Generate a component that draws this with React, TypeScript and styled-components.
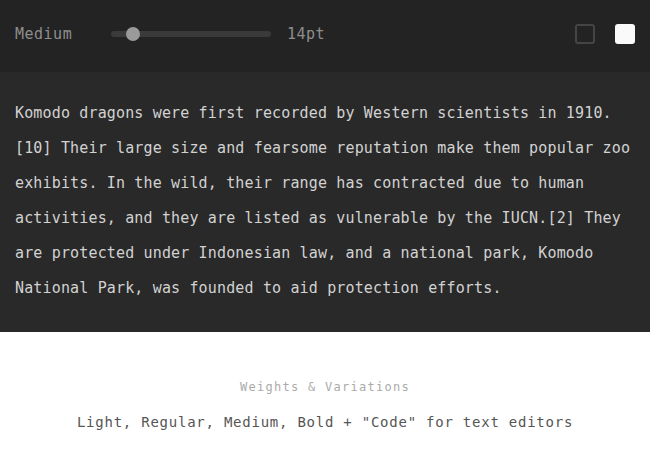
import React from 'react';
import styled, { createGlobalStyle } from 'styled-components';

const GlobalStyle = createGlobalStyle`
  html, body {
    margin: 0;
    padding: 0;
    background: #ffffff;
  }
  body {
    font-family: "DejaVu Sans Mono", "Liberation Mono", monospace;
  }
`;

const lines = [
  'Komodo dragons were first recorded by Western scientists in 1910.',
  '[10] Their large size and fearsome reputation make them popular zoo',
  'exhibits. In the wild, their range has contracted due to human',
  'activities, and they are listed as vulnerable by the IUCN.[2] They',
  'are protected under Indonesian law, and a national park, Komodo',
  'National Park, was founded to aid protection efforts.',
];

const Page = styled.div`
  width: 650px;
  display: flex;
  flex-direction: column;
`;

const Toolbar = styled.div`
  height: 72px;
  background: #232323;
  display: flex;
  align-items: center;
  padding: 0 15px 5px;
  box-sizing: border-box;
`;

const Label = styled.span`
  width: 96px;
  font-size: 15px;
  letter-spacing: 0.5px;
  color: #8e8e8e;
`;

const Track = styled.div`
  position: relative;
  width: 160px;
  height: 6px;
  border-radius: 3px;
  background: #3a3a3a;
`;

const Thumb = styled.div`
  position: absolute;
  top: 50%;
  width: 14px;
  height: 14px;
  margin-top: -7px;
  margin-left: -7px;
  border-radius: 50%;
  background: #9a9a9a;
`;

const Size = styled.span`
  margin-left: 16px;
  font-size: 15px;
  letter-spacing: 0.5px;
  color: #8e8e8e;
`;

const Swatches = styled.div`
  margin-left: auto;
  display: flex;
  gap: 20px;
`;

const Swatch = styled.div<{ $filled?: boolean }>`
  width: 20px;
  height: 20px;
  box-sizing: border-box;
  border-radius: 3px;
  border: 2px solid ${(p) => (p.$filled ? '#fafafa' : '#454545')};
  background: ${(p) => (p.$filled ? '#fafafa' : 'transparent')};
`;

const Sample = styled.div`
  background: #292929;
  padding: 24px 15px 26px;
  font-size: 15px;
  line-height: 35px;
  letter-spacing: 0.15px;
  color: #d2d2d2;
`;

const Line = styled.div`
  white-space: nowrap;
`;

const Info = styled.div`
  display: flex;
  flex-direction: column;
  align-items: center;
  padding-top: 47px;
`;

const Caption = styled.div`
  font-size: 12px;
  letter-spacing: 1.28px;
  color: #ababab;
  line-height: 16px;
`;

const Summary = styled.div`
  margin-top: 17px;
  font-size: 14px;
  letter-spacing: 0.76px;
  color: #555555;
  line-height: 20px;
`;

export default function App() {
  const value = 0.14;
  return (
    <Page>
      <GlobalStyle />
      <Toolbar>
        <Label>Medium</Label>
        <Track>
          <Thumb style={{ left: `${value * 100}%` }} />
        </Track>
        <Size>14pt</Size>
        <Swatches>
          <Swatch />
          <Swatch $filled />
        </Swatches>
      </Toolbar>
      <Sample>
        {lines.map((l) => (
          <Line key={l}>{l}</Line>
        ))}
      </Sample>
      <Info>
        <Caption>Weights &amp; Variations</Caption>
        <Summary>Light, Regular, Medium, Bold + "Code" for text editors</Summary>
      </Info>
    </Page>
  );
}
